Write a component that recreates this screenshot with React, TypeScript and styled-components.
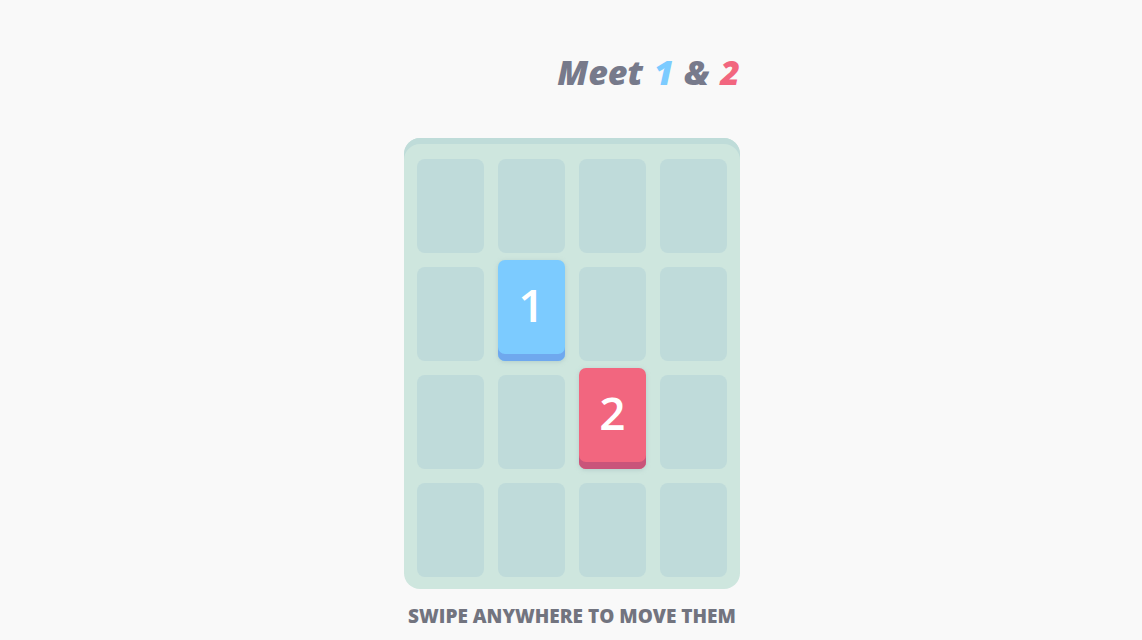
import styled, { createGlobalStyle } from "styled-components";

const GlobalStyle = createGlobalStyle`
  html, body {
    margin: 0;
    padding: 0;
    background: #f9f9f9;
  }
  body {
    font-family: "Open Sans", Lato, sans-serif;
  }
`;

const Page = styled.main`
  display: flex;
  flex-direction: column;
  align-items: center;
  width: 100%;
  min-height: 640px;
  padding-top: 49px;
  padding-left: 2px;
  box-sizing: border-box;
`;

const Heading = styled.h1`
  width: 336px;
  margin: 0;
  text-align: right;
  font-family: "Open Sans", sans-serif;
  font-weight: 800;
  font-style: italic;
  font-size: 34px;
  line-height: 46px;
  color: #777a8b;
  word-spacing: 2px;
`;

const Num = styled.span<{ $tone: "blue" | "red" }>`
  color: ${({ $tone }) => ($tone === "blue" ? "#7ccbff" : "#f2667f")};
`;

const Board = styled.section`
  margin-top: 43px;
  width: 336px;
  box-sizing: border-box;
  padding: 21px 13px 12px;
  border-radius: 16px;
  background: #cee6de;
  box-shadow: inset 0 6px 0 #bfdcd9;
  display: grid;
  grid-template-columns: repeat(4, 67px);
  grid-auto-rows: 94px;
  column-gap: 14px;
  row-gap: 14px;
`;

const Cell = styled.div`
  position: relative;
  border-radius: 8px;
  background: #bfdbda;
`;

const Tile = styled.div<{ $tone: "blue" | "red" }>`
  position: absolute;
  top: -7px;
  left: 0;
  right: 0;
  bottom: 0;
  border-radius: 7px;
  padding-bottom: 13px;
  display: flex;
  align-items: center;
  justify-content: center;
  font-family: "Open Sans", sans-serif;
  font-weight: 600;
  font-size: 46px;
  line-height: 1;
  color: #ffffff;
  background: ${({ $tone }) => ($tone === "blue" ? "#7ccbff" : "#f2667f")};
  box-shadow: inset 0 -7px 0
      ${({ $tone }) => ($tone === "blue" ? "#6fa8ee" : "#c9547a")},
    0 1px 4px rgba(160, 190, 190, 0.6);
`;

const Caption = styled.p`
  margin: 14px 0 0;
  font-family: "Open Sans", sans-serif;
  font-weight: 800;
  font-size: 19px;
  color: #72747f;
`;

// board layout: null is an empty slot, otherwise the tile value
const grid: (null | 1 | 2)[] = [
  null, null, null, null,
  null, 1, null, null,
  null, null, 2, null,
  null, null, null, null,
];

export default function App() {
  return (
    <>
      <GlobalStyle />
      <Page>
        <Heading>
          Meet <Num $tone="blue">1</Num> &amp; <Num $tone="red">2</Num>
        </Heading>
        <Board>
          {grid.map((value, i) => (
            <Cell key={i}>
              {value && (
                <Tile $tone={value === 1 ? "blue" : "red"}>{value}</Tile>
              )}
            </Cell>
          ))}
        </Board>
        <Caption>SWIPE ANYWHERE TO MOVE THEM</Caption>
      </Page>
    </>
  );
}
